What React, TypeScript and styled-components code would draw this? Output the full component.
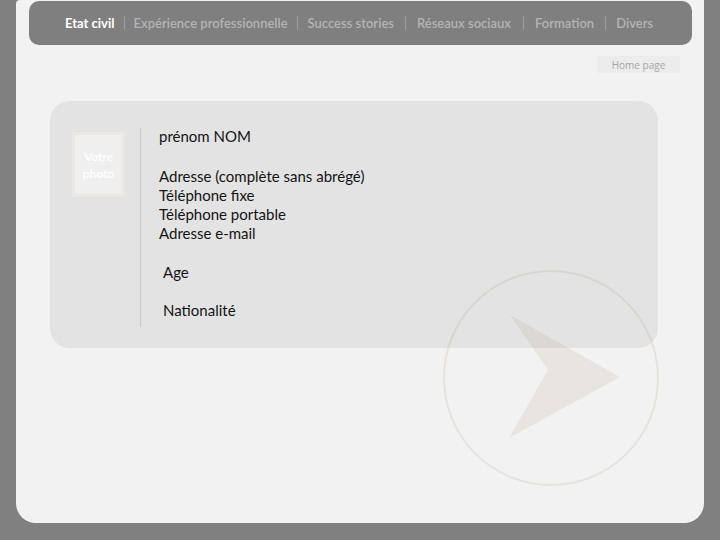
import React from "react";
import styled, { createGlobalStyle } from "styled-components";

const GlobalStyle = createGlobalStyle`
  html, body { margin: 0; padding: 0; background: #808080; }
  body { font-family: "Lato", "Open Sans", sans-serif; }
`;

const Page = styled.div`
  position: relative;
  box-sizing: border-box;
  width: 688px;
  height: 523px;
  margin-left: 16px;
  padding-top: 1px;
  background: #f2f2f2;
  border-radius: 4px 0 20px 20px;
  overflow: hidden;
`;

const Nav = styled.nav`
  display: flex;
  align-items: center;
  height: 44px;
  margin: 0 12px 0 13px;
  padding-left: 36px;
  background: #7f7f7f;
  border-radius: 10px;
`;

const NavItem = styled.span<{ $active?: boolean }>`
  font-family: "Lato", "Open Sans", sans-serif;
  font-size: 13px;
  font-weight: ${(p) => (p.$active ? 700 : 600)};
  color: ${(p) => (p.$active ? "#ffffff" : "#b4b4b4")};
  white-space: nowrap;
`;

const Sep = styled.span<{ $space: number }>`
  display: inline-block;
  width: 1px;
  height: 14px;
  margin: 0 ${(p) => p.$space}px;
  background: #9e9e9e;
`;

const HomeRow = styled.div`
  display: flex;
  justify-content: flex-end;
  margin-top: 11px;
  padding-right: 24px;
`;

const HomeButton = styled.div`
  width: 83px;
  height: 17px;
  display: flex;
  align-items: center;
  justify-content: center;
  background: #ececec;
  color: #a6a6a6;
  font-size: 10px;
  font-family: "Open Sans", sans-serif;
`;

const Card = styled.section`
  position: relative;
  display: flex;
  height: 247px;
  margin: 28px 46px 0 34px;
  background: #e3e3e3;
  border-radius: 20px;
`;

const PhotoCol = styled.div`
  width: 90px;
  padding: 31px 0 0 22px;
  box-sizing: border-box;
`;

const Photo = styled.div`
  width: 53px;
  height: 65px;
  box-sizing: border-box;
  border: 3px solid #ebe8e2;
  background: #efefef;
  display: flex;
  flex-direction: column;
  align-items: center;
  padding-top: 13px;
  color: #ffffff;
  font-size: 12px;
  font-weight: 600;
  line-height: 17px;
  text-align: center;
`;

const Divider = styled.div`
  width: 1px;
  margin: 27px 0 21px;
  background: #c9c9c9;
`;

const Info = styled.div`
  padding: 26px 0 0 18px;
  color: #141414;
  font-family: "Lato", "Open Sans", sans-serif;
  font-size: 15px;
`;

const Line = styled.div<{ $gap?: number; $indent?: number }>`
  height: 19px;
  line-height: 19px;
  margin-top: ${(p) => p.$gap ?? 0}px;
  padding-left: ${(p) => p.$indent ?? 0}px;
  white-space: nowrap;
`;

const Watermark = styled.svg`
  position: absolute;
  left: 425px;
  top: 268px;
  width: 220px;
  height: 220px;
  pointer-events: none;
`;

const items: [string, number][] = [
  ["Expérience professionnelle", 9],
  ["Success stories", 9.5],
  ["Réseaux sociaux", 11],
  ["Formation", 11.5],
  ["Divers", 10.5],
];

export default function App() {
  return (
    <>
      <GlobalStyle />
      <Page>
        <Nav>
          <NavItem $active>Etat civil</NavItem>
          {items.map(([t, s]) => (
            <React.Fragment key={t}>
              <Sep $space={s} />
              <NavItem>{t}</NavItem>
            </React.Fragment>
          ))}
        </Nav>
        <HomeRow>
          <HomeButton>Home page</HomeButton>
        </HomeRow>
        <Card>
          <PhotoCol>
            <Photo>
              <span>Votre</span>
              <span>photo</span>
            </Photo>
          </PhotoCol>
          <Divider />
          <Info>
            <Line>prénom NOM</Line>
            <Line $gap={21}>Adresse (complète sans abrégé)</Line>
            <Line>Téléphone fixe</Line>
            <Line>Téléphone portable</Line>
            <Line>Adresse e-mail</Line>
            <Line $gap={20} $indent={4}>Age</Line>
            <Line $gap={19} $indent={4}>Nationalité</Line>
          </Info>
        </Card>
        <Watermark viewBox="0 0 220 220">
          <circle cx="110" cy="110" r="107" fill="none" stroke="rgba(170,150,110,0.16)" strokeWidth="2" />
          <polygon points="179,109 69,47 107,102 68,170" fill="rgba(170,150,110,0.13)" />
        </Watermark>
      </Page>
    </>
  );
}
